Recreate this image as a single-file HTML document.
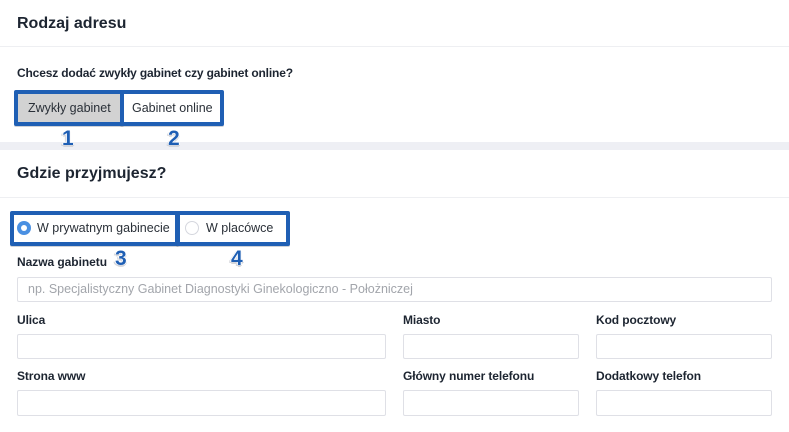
<!DOCTYPE html>
<html><head><meta charset="utf-8"><style>
html,body{margin:0;padding:0}
body{width:789px;height:432px;overflow:hidden;background:#fff;position:relative;font-family:"Liberation Sans",sans-serif;color:#1f2733}
.a{position:absolute;white-space:nowrap}
.t{font-size:16px;font-weight:bold;line-height:18px;left:17px;color:#1d2531}
.l{font-size:12px;font-weight:bold;line-height:14px;letter-spacing:-.1px;color:#1d2531}
.i{position:absolute;box-sizing:border-box;border:1px solid #dfe0e6;border-radius:2px;background:#fff}
.n{font-size:21px;font-weight:bold;color:#1f5fb4;line-height:22px;z-index:5;text-shadow:-1px 0 0 #fff,1px 0 0 #fff,0 -1px 0 #fff,-2px 1px 0 #d4d6dc,1px 1px 0 #d4d6dc,0 2px 0 #d4d6dc}
.b{font-size:12.5px;line-height:14px;color:#2a3038}
.x{position:absolute;box-sizing:border-box;border:4px solid #1f5fb4;border-radius:2px;box-shadow:0 1px 0 rgba(60,70,90,.25)}
</style></head><body>
<div class="a t" style="top:15px">Rodzaj adresu</div>
<div class="a" style="left:0;top:46px;width:789px;height:1px;background:#eeeff2"></div>
<div class="a l" style="left:17px;top:66px;letter-spacing:-.16px">Chcesz dodać zwykły gabinet czy gabinet online?</div>

<div class="x" style="left:14px;top:90px;width:110px;height:35.5px;background:#d2d2d2"></div>
<div class="x" style="left:120px;top:90px;width:104px;height:35.5px;background:#fff"></div>
<div class="a b" style="left:28px;top:101px">Zwykły gabinet</div>
<div class="a b" style="left:132px;top:101px">Gabinet online</div>
<div class="a n" style="left:62px;top:128px">1</div>
<div class="a n" style="left:168px;top:128px">2</div>

<div class="a" style="left:0;top:142px;width:789px;height:8px;background:#eeeff4"></div>

<div class="a t" style="top:165px">Gdzie przyjmujesz?</div>
<div class="a" style="left:0;top:197px;width:789px;height:1px;background:#eeeff2"></div>

<div class="x" style="left:10px;top:211px;width:169px;height:34.5px;background:#fff"></div>
<div class="x" style="left:175.5px;top:211px;width:114.5px;height:34.5px;background:#fff"></div>
<svg class="a" style="left:16px;top:220px" width="16" height="16"><circle cx="8" cy="8" r="7" fill="#4a90e2"/><circle cx="8" cy="8" r="3" fill="#fff"/></svg>
<svg class="a" style="left:184px;top:220px" width="16" height="16"><circle cx="8" cy="8" r="6.5" fill="#fff" stroke="#d5d7de"/></svg>
<div class="a b" style="left:37px;top:221px">W prywatnym gabinecie</div>
<div class="a b" style="left:206px;top:221px">W placówce</div>
<div class="a n" style="left:115px;top:248px">3</div>
<div class="a n" style="left:231px;top:248px">4</div>

<div class="a l" style="left:17px;top:255px;letter-spacing:-.05px">Nazwa gabinetu</div>
<div class="i" style="left:17px;top:277px;width:755px;height:25px"></div>
<div class="a" style="left:28px;top:282px;font-size:12.5px;line-height:14px;color:#a2a5ab">np. Specjalistyczny Gabinet Diagnostyki Ginekologiczno - Położniczej</div>

<div class="a l" style="left:17px;top:313px">Ulica</div>
<div class="a l" style="left:403px;top:313px">Miasto</div>
<div class="a l" style="left:596px;top:313px">Kod pocztowy</div>
<div class="i" style="left:17px;top:334px;width:369px;height:25px"></div>
<div class="i" style="left:403px;top:334px;width:176px;height:25px"></div>
<div class="i" style="left:596px;top:334px;width:176px;height:25px"></div>

<div class="a l" style="left:17px;top:369px">Strona www</div>
<div class="a l" style="left:403px;top:369px">Główny numer telefonu</div>
<div class="a l" style="left:596px;top:369px">Dodatkowy telefon</div>
<div class="i" style="left:17px;top:390px;width:369px;height:26px"></div>
<div class="i" style="left:403px;top:390px;width:176px;height:26px"></div>
<div class="i" style="left:596px;top:390px;width:176px;height:26px"></div>
</body></html>
